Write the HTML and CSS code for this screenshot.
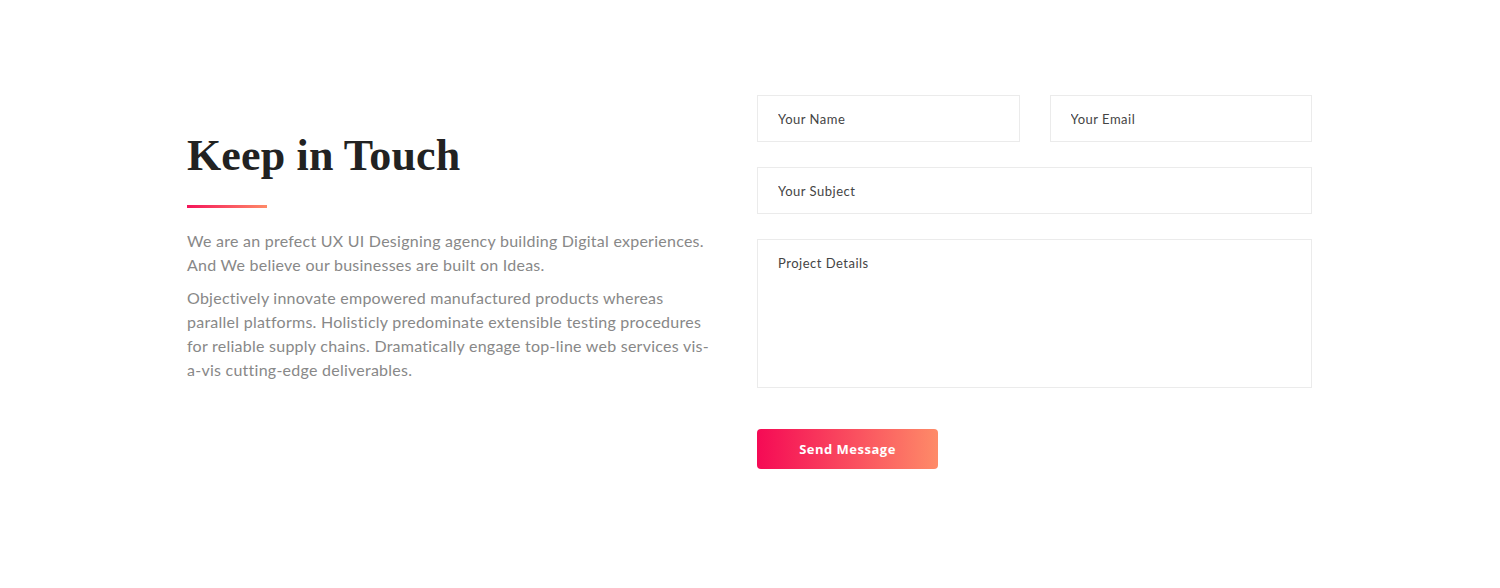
FILE: index.html
```html
<!DOCTYPE html>
<html lang="en">
<head>
<meta charset="utf-8">
<title>Keep in Touch</title>
<link rel="stylesheet" href="styles.css">
</head>
<body>
<section class="contact">
  <div class="container">
    <div class="intro">
      <h2 class="title">Keep in Touch</h2>
      <div class="bar"></div>
      <p class="text">We are an prefect UX UI Designing agency building Digital experiences. And We believe our businesses are built on Ideas.</p>
      <p class="text">Objectively innovate empowered manufactured products whereas parallel platforms. Holisticly predominate extensible testing procedures for reliable supply chains. Dramatically engage top-line web services vis-a-vis cutting-edge deliverables.</p>
    </div>
    <form class="form">
      <div class="row two">
        <input class="field" type="text" placeholder="Your Name">
        <input class="field" type="email" placeholder="Your Email">
      </div>
      <div class="row">
        <input class="field" type="text" placeholder="Your Subject">
      </div>
      <div class="row">
        <textarea class="field area" placeholder="Project Details"></textarea>
      </div>
      <div class="actions">
        <button class="btn" type="button">Send Message</button>
      </div>
    </form>
  </div>
</section>
</body>
</html>
```
FILE: styles.css
```css
* { box-sizing: border-box; }
html, body { margin: 0; padding: 0; background: #fff; }
body { font-family: Lato, "Open Sans", sans-serif; }

.contact { padding-top: 95px; height: 588px; }
.container {
  width: 1126px;
  margin: 0 auto;
  display: flex;
  gap: 30px;
}
.intro { flex: 0 0 540px; padding-top: 35px; }
.title {
  margin: 0;
  font-family: "Liberation Serif", "Times New Roman", serif;
  font-weight: 700;
  font-size: 44px;
  line-height: 52px;
  letter-spacing: 0.15px;
  color: #222;
}
.bar {
  width: 80px;
  height: 3px;
  margin-top: 23px;
  margin-bottom: 21px;
  background: linear-gradient(90deg, #f5145a 0%, #fe8a68 100%);
}
.text {
  max-width: 530px;
  margin: 0 0 9px 0;
  font-size: 16px;
  line-height: 24px;
  letter-spacing: 0.25px;
  color: #888;
}

.form { flex: 0 0 555px; display: flex; flex-direction: column; gap: 25px; }
.row { display: grid; grid-template-columns: 1fr; }
.row.two { grid-template-columns: 1fr 1fr; gap: 30px; }
.field {
  display: block;
  width: 100%;
  height: 47px;
  border: 1px solid #ebebeb;
  border-radius: 0;
  background: #fff;
  padding: 0 20px;
  font-family: Lato, "Open Sans", sans-serif;
  font-size: 13px;
  letter-spacing: 0.5px;
  color: #444;
  outline: none;
}
.field::placeholder { color: #444; opacity: 1; }
.area {
  height: 149px;
  padding: 14px 20px;
  line-height: 18px;
  resize: none;
}
.actions { padding-top: 16px; }
.btn {
  width: 181px;
  height: 40px;
  border: 0;
  border-radius: 4px;
  background: linear-gradient(90deg, #f50a55 0%, #fe8b68 100%);
  color: #fff;
  font-family: "Open Sans", Lato, sans-serif;
  font-weight: 700;
  font-size: 13px;
  letter-spacing: 0.5px;
  cursor: pointer;
}
```
